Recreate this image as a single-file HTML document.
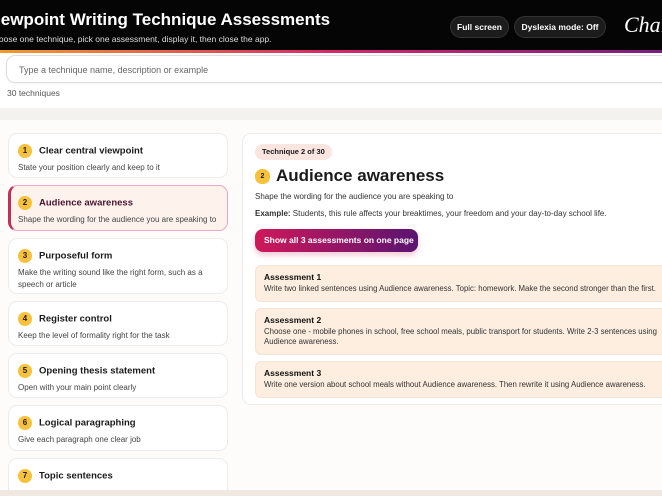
<!DOCTYPE html>
<html><head><meta charset="utf-8"><style>
*{box-sizing:border-box;margin:0;padding:0}
body{width:662px;height:496px;overflow:hidden;background:#f4f2ef;font-family:"Liberation Sans",sans-serif;color:#1a1a1a;position:relative}
.hdr{position:absolute;left:0;top:0;width:662px;height:50px;background:#050505}
.hdr h1{position:absolute;left:-15px;top:10px;font-size:17px;color:#fff;font-weight:bold;white-space:nowrap}
.hdr .sub{position:absolute;left:-12px;top:34px;font-size:8.5px;color:#ddd;white-space:nowrap}
.pill{position:absolute;top:16px;height:22px;border-radius:11px;background:#1c1c1c;border:1px solid #333;color:#fff;font-size:8.5px;font-weight:bold;line-height:20px;text-align:center;white-space:nowrap}
.logo{position:absolute;left:624px;top:12px;font-family:"Liberation Serif",serif;font-style:italic;font-size:22px;color:#fff;white-space:nowrap}
.grad{position:absolute;left:0;top:50px;width:662px;height:3px;background:linear-gradient(90deg,#f39a2a,#d42a6a,#7a1f80)}
.search{position:absolute;left:0;top:53px;width:662px;height:55px;background:#fff}
.input{position:absolute;left:6px;top:2px;width:670px;height:28px;border:1px solid #ddd;border-radius:9px;font-size:9px;color:#666;padding:9px 0 0 12px;box-shadow:0 1px 2px rgba(0,0,0,.05)}
.count{position:absolute;left:7px;top:35px;font-size:8.5px;color:#555}
.main{position:absolute;left:0;top:120px;width:662px;height:370px;background:#fdfcfb}
.card{position:absolute;left:8px;width:220px;background:#fff;border:1px solid #ececec;border-radius:9px;padding:8px 0 0 9px}
.card.sel{background:#fdf3ec;border:1px solid #f0a8bf;border-left:3px solid #c0305a;padding-left:7px}
.num{display:inline-block;width:14px;height:14px;border-radius:7px;background:#f7c13b;font-size:8px;font-weight:bold;text-align:center;line-height:14px;vertical-align:middle;margin-right:7px}
.t{font-size:9.5px;font-weight:bold;vertical-align:middle}
.d{font-size:8px;color:#444;margin-top:2px;line-height:12px;padding-right:8px}
.right{position:absolute;left:242px;top:133px;width:430px;height:272px;background:#fff;border:1px solid #ececec;border-radius:9px}
.badge{position:absolute;left:12px;top:10px;height:16px;padding:0 7px;border-radius:8px;background:#fbe5e0;font-size:7.5px;font-weight:bold;line-height:16px}
.h2{position:absolute;left:12px;top:32px;font-size:17px;font-weight:bold;white-space:nowrap}
.h2 .num{width:15px;height:15px;line-height:15px;font-size:7px;margin-right:6px}
.p{position:absolute;left:12px;font-size:8px;color:#333;white-space:nowrap}
.btn{position:absolute;left:12px;top:95px;width:163px;height:23px;border-radius:8px;background:linear-gradient(90deg,#d0185a,#5a1470);color:#fff;font-size:8.5px;font-weight:bold;line-height:23px;padding-left:9px;box-shadow:0 3px 6px rgba(200,30,90,.25)}
.as{position:absolute;left:12px;width:420px;background:#fdeee0;border:1px solid #f5e3d3;border-radius:6px;padding:6px 0 0 8px;font-size:7.8px;color:#333;line-height:10px}
.as b{display:block;color:#111;font-size:8.5px;margin-bottom:2px}
.foot{position:absolute;left:0;top:490px;width:662px;height:6px;background:#efe9e1}
</style></head><body>
<div class="hdr"><h1>Viewpoint Writing Technique Assessments</h1><div class="sub">Choose one technique, pick one assessment, display it, then close the app.</div>
<div class="pill" style="left:450px;width:59px">Full screen</div>
<div class="pill" style="left:514px;width:92px">Dyslexia mode: Off</div>
<div class="logo">Chalk</div></div>
<div class="grad"></div>
<div class="search"><div class="input">Type a technique name, description or example</div><div class="count">30 techniques</div></div>
<div class="main"></div>
<div class="card" style="top:133px;height:45px"><span class="num">1</span><span class="t">Clear central viewpoint</span><div class="d">State your position clearly and keep to it</div></div>
<div class="card sel" style="top:185px;height:46px"><span class="num">2</span><span class="t" style="color:#4a1530">Audience awareness</span><div class="d">Shape the wording for the audience you are speaking to</div></div>
<div class="card" style="top:238px;height:56px"><span class="num">3</span><span class="t">Purposeful form</span><div class="d">Make the writing sound like the right form, such as a speech or article</div></div>
<div class="card" style="top:301px;height:45px"><span class="num">4</span><span class="t">Register control</span><div class="d">Keep the level of formality right for the task</div></div>
<div class="card" style="top:353px;height:45px"><span class="num">5</span><span class="t">Opening thesis statement</span><div class="d">Open with your main point clearly</div></div>
<div class="card" style="top:405px;height:46px"><span class="num">6</span><span class="t">Logical paragraphing</span><div class="d">Give each paragraph one clear job</div></div>
<div class="card" style="top:458px;height:32px;border-bottom:none;border-radius:9px 9px 0 0"><span class="num">7</span><span class="t">Topic sentences</span></div>
<div class="right">
<div class="badge">Technique 2 of 30</div>
<div class="h2"><span class="num">2</span>Audience awareness</div>
<div class="p" style="top:58px">Shape the wording for the audience you are speaking to</div>
<div class="p" style="top:75px"><b>Example:</b> Students, this rule affects your breaktimes, your freedom and your day-to-day school life.</div>
<div class="btn">Show all 3 assessments on one page</div>
<div class="as" style="top:131px;height:37px"><b>Assessment 1</b>Write two linked sentences using Audience awareness. Topic: homework. Make the second stronger than the first.</div>
<div class="as" style="top:174px;height:47px"><b>Assessment 2</b>Choose one - mobile phones in school, free school meals, public transport for students. Write 2-3 sentences using Audience awareness.</div>
<div class="as" style="top:227px;height:37px"><b>Assessment 3</b>Write one version about school meals without Audience awareness. Then rewrite it using Audience awareness.</div>
</div>
<div class="foot"></div>
</body></html>
